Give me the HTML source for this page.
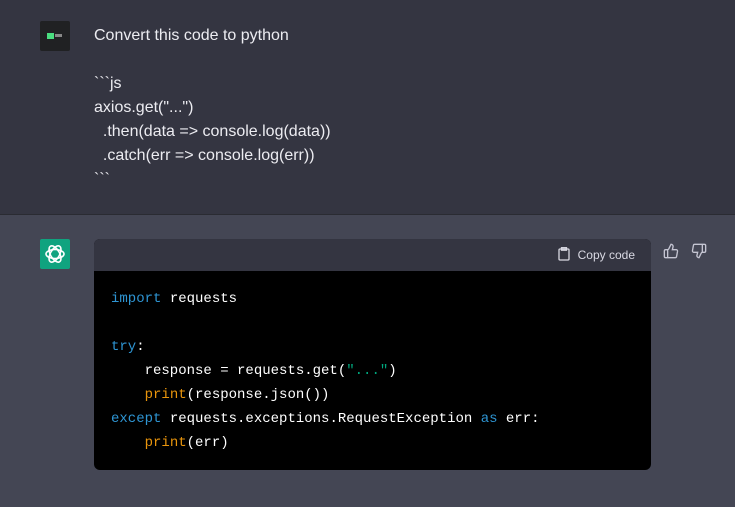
<!DOCTYPE html>
<html><head><style>
body{margin:0;width:735px;height:507px;overflow:hidden;font-family:"Liberation Sans",sans-serif;}
.top{position:absolute;left:0;top:0;width:735px;height:214px;background:#343541;border-bottom:1px solid #2a2b32}
.bot{position:absolute;left:0;top:215px;width:735px;height:292px;background:#444654}
.av1{position:absolute;left:40px;top:21px;width:30px;height:30px;background:#202123;border-radius:2px}
.av1 i{position:absolute;left:7px;top:12px;width:7px;height:6px;background:#4ade80}
.av1 b{position:absolute;left:15px;top:13px;width:7px;height:3px;background:#888}
.q{position:absolute;left:94px;top:24px;color:#ececf1;font-size:16px;line-height:24px;white-space:pre}
.av2{position:absolute;left:40px;top:239px;width:30px;height:30px;background:#10a37f;border-radius:2px}
.cb{position:absolute;left:94px;top:239px;width:557px;height:231px;border-radius:6px;overflow:hidden;background:#000}
.hd{height:32px;background:#343541;position:relative}
.cp{position:absolute;right:16px;top:8px;color:#d9d9e3;font-size:12px}
pre{margin:0;padding:16px 17px;font-family:"Liberation Mono",monospace;font-size:14px;line-height:24px;color:#fff}
.k{color:#2e95d3}.s{color:#00a67d}.o{color:#e9950c}
</style></head><body>
<div class="top"></div><div class="bot"></div>
<div class="av1"><i></i><b></b></div>
<div class="q">Convert this code to python

&#96;&#96;&#96;js
axios.get("...")
  .then(data =&gt; console.log(data))
  .catch(err =&gt; console.log(err))
&#96;&#96;&#96;</div>
<div class="av2"><svg width="30" height="30" viewBox="0 0 30 30" fill="none" stroke="#fff" stroke-width="1.6"><g transform="translate(15 15)"><ellipse rx="9" ry="4.5"/><ellipse rx="9" ry="4.5" transform="rotate(60)"/><ellipse rx="9" ry="4.5" transform="rotate(120)"/></g></svg></div>
<div class="cb"><div class="hd"><div class="cp"><svg width="12" height="14" viewBox="0 0 12 14" style="vertical-align:-2px;margin-right:8px" fill="none" stroke="#d9d9e3" stroke-width="1.3"><rect x="1" y="2" width="10" height="11" rx="1"/><rect x="3.5" y="0.7" width="5" height="2.5"/></svg>Copy code</div></div>
<pre><span class="k">import</span> requests

<span class="k">try</span>:
    response = requests.get(<span class="s">"..."</span>)
    <span class="o">print</span>(response.json())
<span class="k">except</span> requests.exceptions.RequestException <span class="k">as</span> err:
    <span class="o">print</span>(err)</pre></div>
<svg style="position:absolute;left:663px;top:243px" width="16" height="16" viewBox="0 0 24 24" fill="none" stroke="#c5c5d2" stroke-width="2"><path d="M7 10v12M15 5.9L14 10h5.8a2 2 0 012 2.3l-1.4 8A2 2 0 0118.4 22H4a2 2 0 01-2-2v-8a2 2 0 012-2h2.8a2 2 0 001.8-1.1L12 2a3 3 0 013 3.9z"/></svg>
<svg style="position:absolute;left:691px;top:243px" width="16" height="16" viewBox="0 0 24 24" fill="none" stroke="#c5c5d2" stroke-width="2"><path d="M17 14V2M9 18.1L10 14H4.2a2 2 0 01-2-2.3l1.4-8A2 2 0 015.6 2H20a2 2 0 012 2v8a2 2 0 01-2 2h-2.8a2 2 0 00-1.8 1.1L12 22a3 3 0 01-3-3.9z"/></svg>
</body></html>
